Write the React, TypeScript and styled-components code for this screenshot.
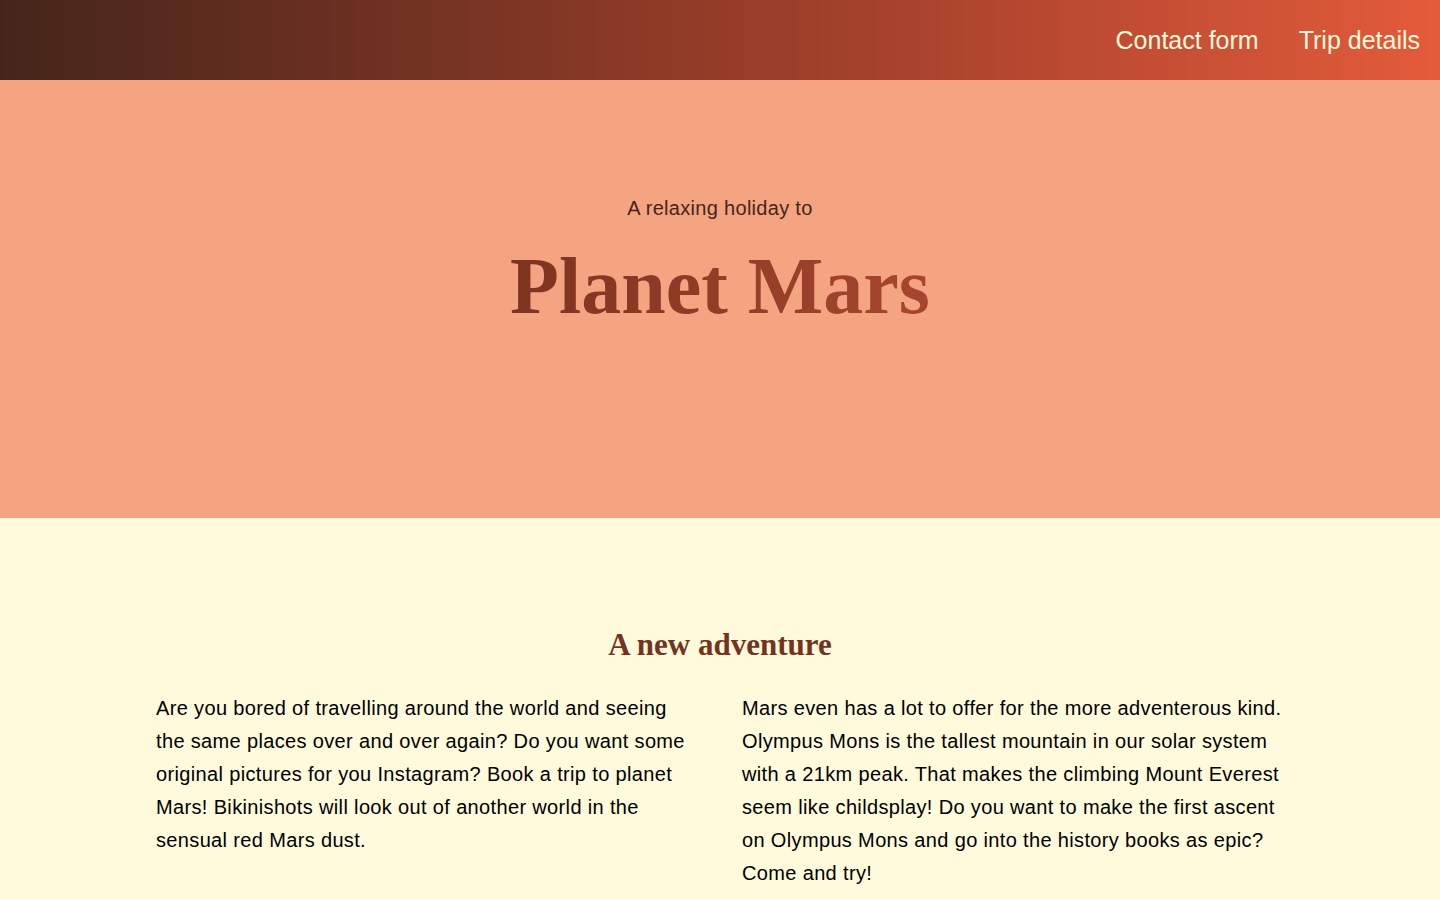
import React from "react";
import styled, { createGlobalStyle } from "styled-components";

const GlobalStyle = createGlobalStyle`
  html, body { margin: 0; padding: 0; }
  body {
    font-family: "Liberation Sans", Arial, sans-serif;
    background: #fefadb;
    color: #000;
  }
  * { box-sizing: border-box; }
`;

const Header = styled.header`
  height: 80px;
  display: flex;
  justify-content: flex-end;
  align-items: center;
  background: linear-gradient(90deg, #45251a 0%, #a4412b 60%, #e35b3b 100%);
`;

const NavLink = styled.a`
  font-family: "Liberation Sans", Arial, sans-serif;
  font-size: 25px;
  color: #fefadb;
  text-decoration: none;
  padding: 0 20px;
  line-height: 30px;
`;

const Hero = styled.section`
  height: 438px;
  background: #f5a482;
  display: flex;
  flex-direction: column;
  align-items: center;
  padding-top: 116px;
`;

const Tagline = styled.p`
  margin: 0;
  font-size: 20px;
  line-height: 24px;
  letter-spacing: 0.3px;
  color: #45251a;
`;

const Title = styled.h1`
  margin: 26px 0 0;
  font-family: "Liberation Serif", "Times New Roman", serif;
  font-weight: 700;
  font-size: 80px;
  line-height: 80px;
  background: linear-gradient(90deg, #7c3420 0%, #a7462f 100%);
  -webkit-background-clip: text;
  background-clip: text;
  color: transparent;
`;

const Content = styled.section`
  padding: 109px 156px 40px;
`;

const Heading = styled.h2`
  margin: 0;
  text-align: center;
  font-family: "Liberation Serif", "Times New Roman", serif;
  font-weight: 700;
  font-size: 31px;
  line-height: 36px;
  color: #73341f;
`;

const Columns = styled.div`
  display: grid;
  grid-template-columns: 1fr 1fr;
  column-gap: 44px;
  margin-top: 29px;
`;

const Para = styled.p`
  margin: 0;
  font-size: 20px;
  line-height: 33px;
  letter-spacing: 0.35px;
  color: #000;
`;

export default function App() {
  return (
    <>
      <GlobalStyle />
      <Header>
        <NavLink href="#">Contact form</NavLink>
        <NavLink href="#">Trip details</NavLink>
      </Header>
      <Hero>
        <Tagline>A relaxing holiday to</Tagline>
        <Title>Planet Mars</Title>
      </Hero>
      <Content>
        <Heading>A new adventure</Heading>
        <Columns>
          <Para>
            Are you bored of travelling around the world and seeing the same
            places over and over again? Do you want some original pictures for
            you Instagram? Book a trip to planet Mars! Bikinishots will look out
            of another world in the sensual red Mars dust.
          </Para>
          <Para>
            Mars even has a lot to offer for the more adventerous kind. Olympus
            Mons is the tallest mountain in our solar system with a 21km peak.
            That makes the climbing Mount Everest seem like childsplay! Do you
            want to make the first ascent on Olympus Mons and go into the
            history books as epic? Come and try!
          </Para>
        </Columns>
      </Content>
    </>
  );
}
